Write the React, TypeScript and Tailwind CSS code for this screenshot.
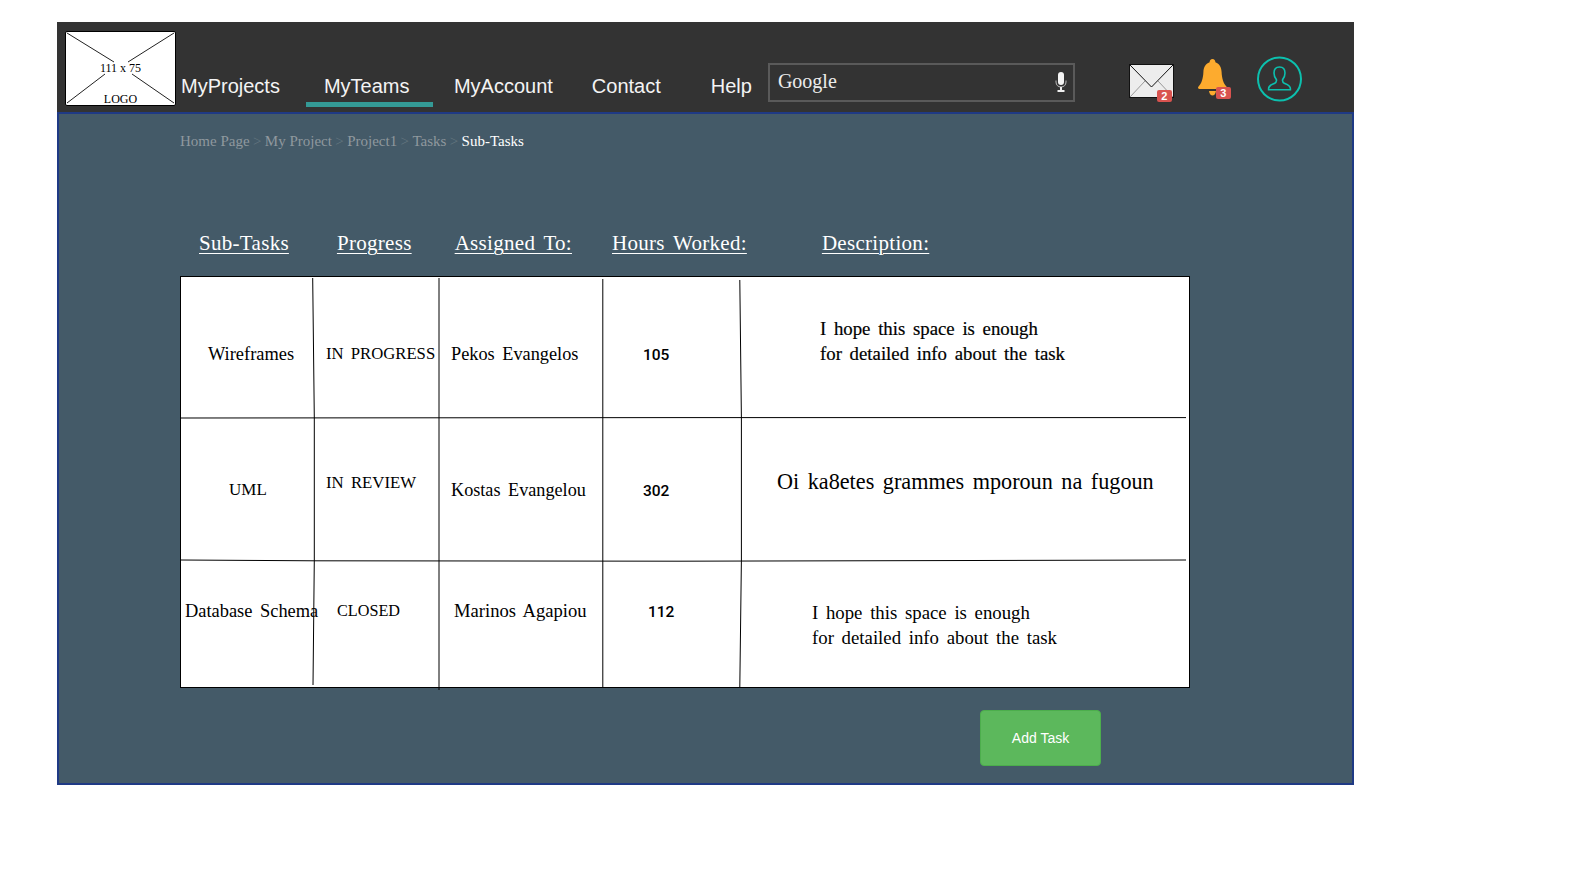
const serif = "font-['Liberation_Serif',serif]";

function Logo() {
  return (
    <div className="relative w-[111px] h-[75px] bg-white border border-black rounded-[2px] shrink-0 mt-[9px] ml-[8px]">
      <svg className="absolute inset-0" width="109" height="73" viewBox="0 0 109 73" fill="none" stroke="#222" strokeWidth="1">
        <path d="M1 1 L48 30 M108 1 L62 30 M1 71 L39 42 M108 71 L66 42" />
      </svg>
      <span className={`absolute left-0 right-0 top-[28px] text-center text-[12px] leading-[16px] text-black ${serif}`}>111 x 75</span>
      <span className={`absolute left-0 right-0 top-[60px] text-center text-[12px] leading-[14px] text-black ${serif}`}>LOGO</span>
    </div>
  );
}

function Mic() {
  return (
    <svg width="12" height="21" viewBox="0 0 12 21" fill="none">
      <rect x="3" y="0" width="6" height="13" rx="3" fill="#f4f4f4" />
      <path d="M1 8.5 V10 C1 13 3 15 6 15 C9 15 11 13 11 10 V8.5" stroke="#bbb" strokeWidth="1" />
      <rect x="5" y="15" width="2" height="3" fill="#eee" />
      <rect x="2.5" y="18" width="7" height="2" fill="#eee" />
    </svg>
  );
}

function Badge({ n, className }: { n: string; className: string }) {
  return (
    <span className={`absolute flex items-center justify-center w-[15px] h-[12px] rounded-[2px] bg-[#d9534f] text-white text-[11px] leading-none font-bold font-['Liberation_Sans',sans-serif] ${className}`}>
      {n}
    </span>
  );
}

function Envelope() {
  return (
    <div className="relative w-[45px] h-[38px] mt-[42px] ml-[54px]">
      <svg width="45" height="34" viewBox="0 0 45 34" className="absolute left-0 top-0">
        <rect x="0.5" y="0.5" width="44" height="33" fill="#ededed" stroke="#111" />
        <path d="M1 33 L16 17 M44 33 L29 17" stroke="#999" fill="none" />
        <path d="M1 1 L22.5 23 L44 1" stroke="#111" fill="none" />
      </svg>
      <Badge n="2" className="left-[28px] top-[26px]" />
    </div>
  );
}

function Bell() {
  return (
    <div className="relative w-[34px] h-[40px] mt-[37px] ml-[24px]">
      <svg width="29" height="37" viewBox="0 0 29 37" className="absolute left-0 top-0" fill="#fdab2e">
        <path d="M14.5 0 C12.7 0 11.6 1.4 11.6 3.2 C7.4 4.6 5.6 8.4 5.4 13 C5.1 19 4 24 0 28.2 C0 29.8 1 30 2.5 30 H26.5 C28 30 29 29.8 29 28.2 C25 24 23.9 19 23.6 13 C23.4 8.4 21.6 4.6 17.4 3.2 C17.4 1.4 16.3 0 14.5 0 Z" />
        <path d="M11 32 H18 C17.6 35 16 36.5 14.5 36.5 C13 36.5 11.4 35 11 32 Z" />
      </svg>
      <Badge n="3" className="left-[18px] top-[28px]" />
    </div>
  );
}

function UserIcon() {
  return (
    <svg width="45" height="46" viewBox="0 0 45 46" fill="none" stroke="#0cc0ae" className="mt-[34px] ml-[25px] shrink-0">
      <circle cx="22.5" cy="23" r="21.5" strokeWidth="2" />
      <path
        d="M22.5 11 C18.8 11 17 13.6 17 17 C17 19.8 18 22 19.4 23.6 C19.8 25.6 19.2 26.6 17.4 27.4 C14.4 28.6 11.6 29.6 11.6 32.6 V33.8 H33.4 V32.6 C33.4 29.6 30.6 28.6 27.6 27.4 C25.8 26.6 25.2 25.6 25.6 23.6 C27 22 28 19.8 28 17 C28 13.6 26.2 11 22.5 11 Z"
        strokeWidth="1.6"
      />
    </svg>
  );
}

function Header() {
  return (
    <header className="flex h-[90px] bg-[#333333] text-white shrink-0">
      <Logo />
      <nav className="flex items-start font-['Liberation_Sans',sans-serif] text-[20px] leading-[24px] text-[#f4f4f4]">
        <a className="ml-[5px] mt-[52px]">MyProjects</a>
        <a className="ml-[26px] mt-[52px] w-[127px] h-[33px] pl-[18px] border-b-[5px] border-[#349a96] box-border">MyTeams</a>
        <a className="ml-[21px] mt-[52px]">MyAccount</a>
        <a className="ml-[39px] mt-[52px]">Contact</a>
        <a className="ml-[50px] mt-[52px]">Help</a>
      </nav>
      <div className="flex items-center justify-between w-[307px] h-[39px] mt-[41px] ml-[16px] border-2 border-[#5a5a5a] pl-[8px] pr-[6px] shrink-0">
        <span className={`${serif} text-[20px] leading-none text-[#ececec] -mt-[3px]`}>Google</span>
        <Mic />
      </div>
      <Envelope />
      <Bell />
      <UserIcon />
    </header>
  );
}

function Breadcrumb() {
  const items = ["Home Page", "My Project", "Project1", "Tasks"];
  return (
    <div className={`flex items-center ml-[121px] mt-[17px] h-[20px] text-[15px] text-[#8f989e] ${serif}`}>
      {items.map((t) => (
        <span key={t} className="flex">
          <span>{t}</span>
          <span className="mx-[3.4px] text-[#63757f]">&gt;</span>
        </span>
      ))}
      <span className="text-white">Sub-Tasks</span>
    </div>
  );
}

function Headings() {
  const cls = "underline underline-offset-[3px] decoration-1";
  return (
    <div className={`flex mt-[77px] ml-[140px] h-[30px] text-[21px] leading-[30px] text-white tracking-[0.3px] [word-spacing:3px] ${serif}`}>
      <span className={cls}>Sub-Tasks</span>
      <span className={`${cls} ml-[48px]`}>Progress</span>
      <span className={`${cls} ml-[43px]`}>Assigned To:</span>
      <span className={`${cls} ml-[40px]`}>Hours Worked:</span>
      <span className={`${cls} ml-[75px]`}>Description:</span>
    </div>
  );
}

type Cell = { t: string; c: string; num?: boolean };

const rows: { h: string; cells: Cell[] }[] = [
  {
    h: "h-[142px]",
    cells: [
      { t: "Wireframes", c: "pl-[28px] pt-[66px] text-[18.4px]" },
      { t: "IN PROGRESS", c: "pl-[12px] pt-[66px] text-[16.7px]" },
      { t: "Pekos Evangelos", c: "pl-[12px] pt-[66px] text-[18.3px]" },
      { t: "105", c: "pl-[40px] pt-[67px]", num: true },
      { t: "I hope this space is enough\nfor detailed info about the task", c: "pl-[79px] pt-[41px] text-[18.8px] [-webkit-text-stroke:0.2px_black]" },
    ],
  },
  {
    h: "h-[142px]",
    cells: [
      { t: "UML", c: "pl-[49px] pt-[60px] text-[17px]" },
      { t: "IN REVIEW", c: "pl-[12px] pt-[53px] text-[16.8px]" },
      { t: "Kostas Evangelou", c: "pl-[12px] pt-[60px] text-[18.2px]" },
      { t: "302", c: "pl-[40px] pt-[61px]", num: true },
      { t: "Oi ka8etes grammes mporoun na fugoun", c: "pl-[36px] pt-[52px] text-[22.2px]" },
    ],
  },
  {
    h: "h-[128px]",
    cells: [
      { t: "Database Schema", c: "pl-[5px] pt-[39px] text-[18.4px]" },
      { t: "CLOSED", c: "pl-[23px] pt-[39px] text-[16.2px]" },
      { t: "Marinos Agapiou", c: "pl-[15px] pt-[39px] text-[18.6px]" },
      { t: "112", c: "pl-[45px] pt-[40px]", num: true },
      { t: "I hope this space is enough\nfor detailed info about the task", c: "pl-[71px] pt-[41px] text-[18.8px]" },
    ],
  },
];

function Table() {
  return (
    <div className="relative w-[1010px] h-[412px] ml-[121px] mt-[18px] bg-white text-black">
      {rows.map((r, i) => (
        <div key={i} className={`grid grid-cols-[134px_125px_164px_138px_449px] ${r.h}`}>
          {r.cells.map((c, j) => (
            <div
              key={j}
              className={`whitespace-pre ${
                c.num
                  ? "font-['Roboto',sans-serif] font-medium text-[15.5px] leading-[24px]"
                  : `${serif} leading-[24.5px] [word-spacing:3px]`
              } ${c.c}`}
            >
              {c.t}
            </div>
          ))}
        </div>
      ))}
      <svg className="absolute left-0 top-0 pointer-events-none overflow-visible" width="1010" height="412" viewBox="0 0 1010 412" fill="none" stroke="#000" strokeWidth="1">
        <rect x="0.5" y="0.5" width="1009" height="411" />
        <path d="M1 142 L500 141.6 L1006 141.6" />
        <path d="M1 284 L134 284.8 L500 285.2 L1006 284" />
        <path d="M132.7 2 L134.3 142 L134.3 284 L133 409" />
        <path d="M259 2 L259 414" />
        <path d="M422.8 3 L422.8 411" />
        <path d="M559.8 4 L561.4 142 L561.4 284 L559.8 411" />
      </svg>
    </div>
  );
}

export default function App() {
  return (
    <div className="min-h-[875px] bg-white pt-[22px] pl-[57px]">
      <div className="flex flex-col w-[1297px] h-[763px]">
        <Header />
        <main className="flex-1 bg-[#445a68] border-2 border-[#1f3a85] box-border">
          <Breadcrumb />
          <Headings />
          <Table />
          <div className="flex justify-end w-[1042px] mt-[22px]">
            <button className="w-[121px] h-[56px] rounded-[4px] bg-[#5cb85c] border border-[#4cae4c] text-white text-[14px] font-['Liberation_Sans',sans-serif]">
              Add Task
            </button>
          </div>
        </main>
      </div>
    </div>
  );
}
